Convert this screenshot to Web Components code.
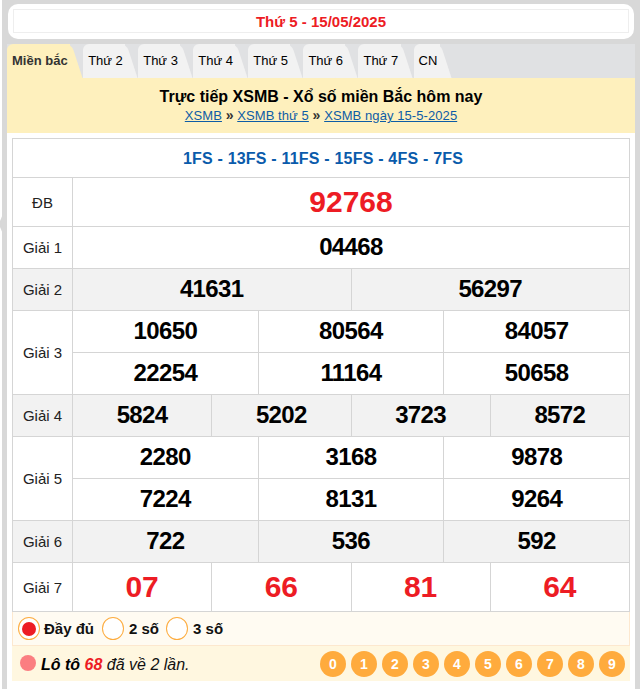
<!DOCTYPE html>
<html lang="vi">
<head>
<meta charset="utf-8">
<title>XSMB</title>
<style>
html,body{margin:0;padding:0;background:#fff;overflow:hidden}
body{font-family:"Liberation Sans",Arial,sans-serif;color:#000}
</style>
</head>
<body>
<xs-edge></xs-edge>
<xs-page>
  <xs-datebar>Thứ 5 - 15/05/2025</xs-datebar>
  <xs-main>
    <xs-tabs>
      <xs-tab active>Miền bắc</xs-tab><xs-tab>Thứ 2</xs-tab><xs-tab>Thứ 3</xs-tab><xs-tab>Thứ 4</xs-tab><xs-tab>Thứ 5</xs-tab><xs-tab>Thứ 6</xs-tab><xs-tab>Thứ 7</xs-tab><xs-tab>CN</xs-tab>
    </xs-tabs>
    <xs-banner></xs-banner>
    <xs-result></xs-result>
    <xs-options></xs-options>
    <xs-loto></xs-loto>
  </xs-main>
</xs-page>
<script>
function def(name, css, html, init){
  customElements.define(name, class extends HTMLElement{
    constructor(){
      super();
      const r=this.attachShadow({mode:'open'});
      r.innerHTML='<style>'+css+'</style>'+html;
      if(init) init(r,this);
    }
  });
}
def('xs-edge',
  ':host{display:block;position:absolute;left:0;top:214px;width:3px;height:20px;background:#d8d8d8;clip-path:polygon(100% 0,0 35%,0 65%,100% 100%)}',
  '');
def('xs-page',
  ':host{display:block;margin-left:2px;background:#d8d8d8;padding:4px 5px 0;height:685px;overflow:hidden}',
  '<slot></slot>');
def('xs-main',
  ':host{display:block;background:#fff;padding-bottom:8px}',
  '<slot></slot>');
def('xs-datebar',
  ':host{display:block;margin:0 1px 5px;background:#fff;border-radius:10px;padding:5px 5px 6px}'+
  'div{border:1px solid #eee;display:flex;align-items:center;justify-content:center;font:bold 15px "Liberation Sans",sans-serif;color:#ed1c24;padding-top:1px;box-sizing:content-box;height:21px}',
  '<div><slot></slot></div>');
def('xs-tabs',
  ':host{display:flex;height:34px;background:#e0e1e3;overflow:hidden}',
  '<slot></slot>');
def('xs-tab',
  ':host{display:block;position:relative;margin-right:1px;padding:0 14.35px 0 5px;height:34px;font:13px/33px "Liberation Sans",sans-serif;color:#000;--bg:#f2f2f2}'+
  ':host([active]){--bg:#fef0bd;font-weight:bold;color:#333;padding-right:14.5px}'+
  '.a{position:absolute;left:0;top:0;bottom:0;right:12px;background:var(--bg);border-top-left-radius:6px}'+
  '.b{position:absolute;top:0;bottom:0;right:5.5px;width:22px;background:var(--bg);border-top-right-radius:6px;transform:skewX(18deg)}'+
  'span{position:relative}',
  '<div class="a"></div><div class="b"></div><span><slot></slot></span>');
def('xs-banner',
  ':host{display:block;height:55px;background:#fef0bd;text-align:center;box-sizing:border-box;padding-top:9px}'+
  'h2{margin:0;font:bold 16px/20px "Liberation Sans",sans-serif;color:#000}'+
  'p{margin:0;font:13px/17px "Liberation Sans",sans-serif;color:#333;letter-spacing:.08px}'+
  'a{color:#0d5ca6;text-decoration:underline}b{font-size:14px}',
  '<h2>Trực tiếp XSMB - Xổ số miền Bắc hôm nay</h2><p><a href="#">XSMB</a> <b>»</b> <a href="#">XSMB thứ 5</a> <b>»</b> <a href="#">XSMB ngày 15-5-2025</a></p>');
const ROWS=[
 {l:'ĐB',v:[['92768',12,'x']]},
 {l:'Giải 1',v:[['04468',12]]},
 {l:'Giải 2',alt:1,v:[['41631',6],['56297',6]]},
 {l:'Giải 3',span:2,v:[['10650',4],['80564',4],['84057',4],['22254',4],['11164',4],['50658',4]]},
 {l:'Giải 4',alt:1,v:[['5824',3],['5202',3],['3723',3],['8572',3]]},
 {l:'Giải 5',span:2,v:[['2280',4],['3168',4],['9878',4],['7224',4],['8131',4],['9264',4]]},
 {l:'Giải 6',alt:1,v:[['722',4],['536',4],['592',4]]},
 {l:'Giải 7',v:[['07',3,'x'],['66',3,'x'],['81',3,'x'],['64',3,'x']]}
];
let cells='<div class="fs">1FS - 13FS - 11FS - 15FS - 4FS - 7FS</div>';
ROWS.forEach(r=>{
  const a=r.alt?' alt':'';
  cells+='<div class="c lb'+a+'" style="grid-row:span '+(r.span||1)+'">'+r.l+'</div>';
  r.v.forEach(([t,s,x])=>{
    cells+='<div class="c n'+a+(x?' big':'')+'" style="grid-column:span '+s+'">'+t+'</div>';
  });
});
def('xs-result',
  ':host{display:block;margin:5px 5px 0;border:solid #d5d5d5;border-width:1px 0 0 1px;box-sizing:border-box}'+
  '.g{display:grid;grid-template-columns:60px repeat(12,1fr);grid-template-rows:39px 49px 42px 42px 42px 42px 42px 42px 42px 42px 49px}'+
  '.fs{grid-column:1/-1;display:flex;align-items:center;justify-content:center;border:solid #d5d5d5;border-width:0 1px 1px 0;font:bold 16px "Liberation Sans",sans-serif;color:#0a5bab;letter-spacing:.2px;padding:1px 0 0 4px}'+
  '.c{display:flex;align-items:center;justify-content:center;border:solid #d5d5d5;border-width:0 1px 1px 0;min-width:0}'+
  '.lb{font:15px "Liberation Sans",sans-serif;color:#222}'+
  '.n{font:bold 24px "Liberation Sans",sans-serif;color:#000;letter-spacing:-.6px;padding:0 0 2px 0}'+
  '.big{font-size:30px;color:#ed1c24;letter-spacing:0;padding:0}'+
  '.alt{background:#f2f2f2}',
  '<div class="g">'+cells+'</div>');
def('xs-radio',
  ':host{display:flex;align-items:center;font:bold 15px "Liberation Sans",sans-serif;color:#111}'+
  ':host(:last-child){margin-left:-1px}'+
  '.o{width:20px;height:21px;border:1px solid #fdac3f;border-radius:50%;background:#fff;display:flex;align-items:center;justify-content:center;margin-right:5px}'+
  ':host([checked]) .o{margin-right:4px}'+
  '.d{width:14px;height:14px;border-radius:50%;background:#ed1c24}',
  '<span class="o"></span><slot></slot>',
  (r,h)=>{ if(h.hasAttribute('checked')) r.querySelector('.o').innerHTML='<span class="d"></span>'; });
def('xs-options',
  ':host{display:flex;align-items:center;gap:8px;height:33px;margin:0 5px;padding-left:5px;background:#fffbf2;border:solid #fde8cf;border-width:0 1px 1px;width:611px}',
  '<xs-radio checked>Đầy đủ</xs-radio><xs-radio>2 số</xs-radio><xs-radio>3 số</xs-radio>');
def('xs-ball',
  ':host{display:flex;align-items:center;justify-content:center;width:26px;height:26px;border-radius:50%;background:#ffab3d;color:#fff;font:bold 14px "Liberation Sans",sans-serif}',
  '<slot></slot>');
def('xs-loto',
  ':host{display:flex;align-items:center;height:35px;margin:0 5px;padding:0 5px 0 8px;background:#fff7e0;box-sizing:border-box;width:618px;font:italic 16px "Liberation Sans",sans-serif;color:#111}'+
  '.dot{width:16px;height:16px;border-radius:50%;background:#fb7e81;margin:0 5px 2px 0}'+
  'b{color:#000}em{color:#ed1c24;font-weight:bold}'+
  '.t{flex:1;white-space:pre;padding-top:2px}.bs{display:flex;gap:5px}',
  '<span class="dot"></span><span class="t"><b>Lô tô</b> <em>68</em> đã về 2 lần.</span><div class="bs">'+
  [0,1,2,3,4,5,6,7,8,9].map(n=>'<xs-ball>'+n+'</xs-ball>').join('')+'</div>');
</script>
</body>
</html>
